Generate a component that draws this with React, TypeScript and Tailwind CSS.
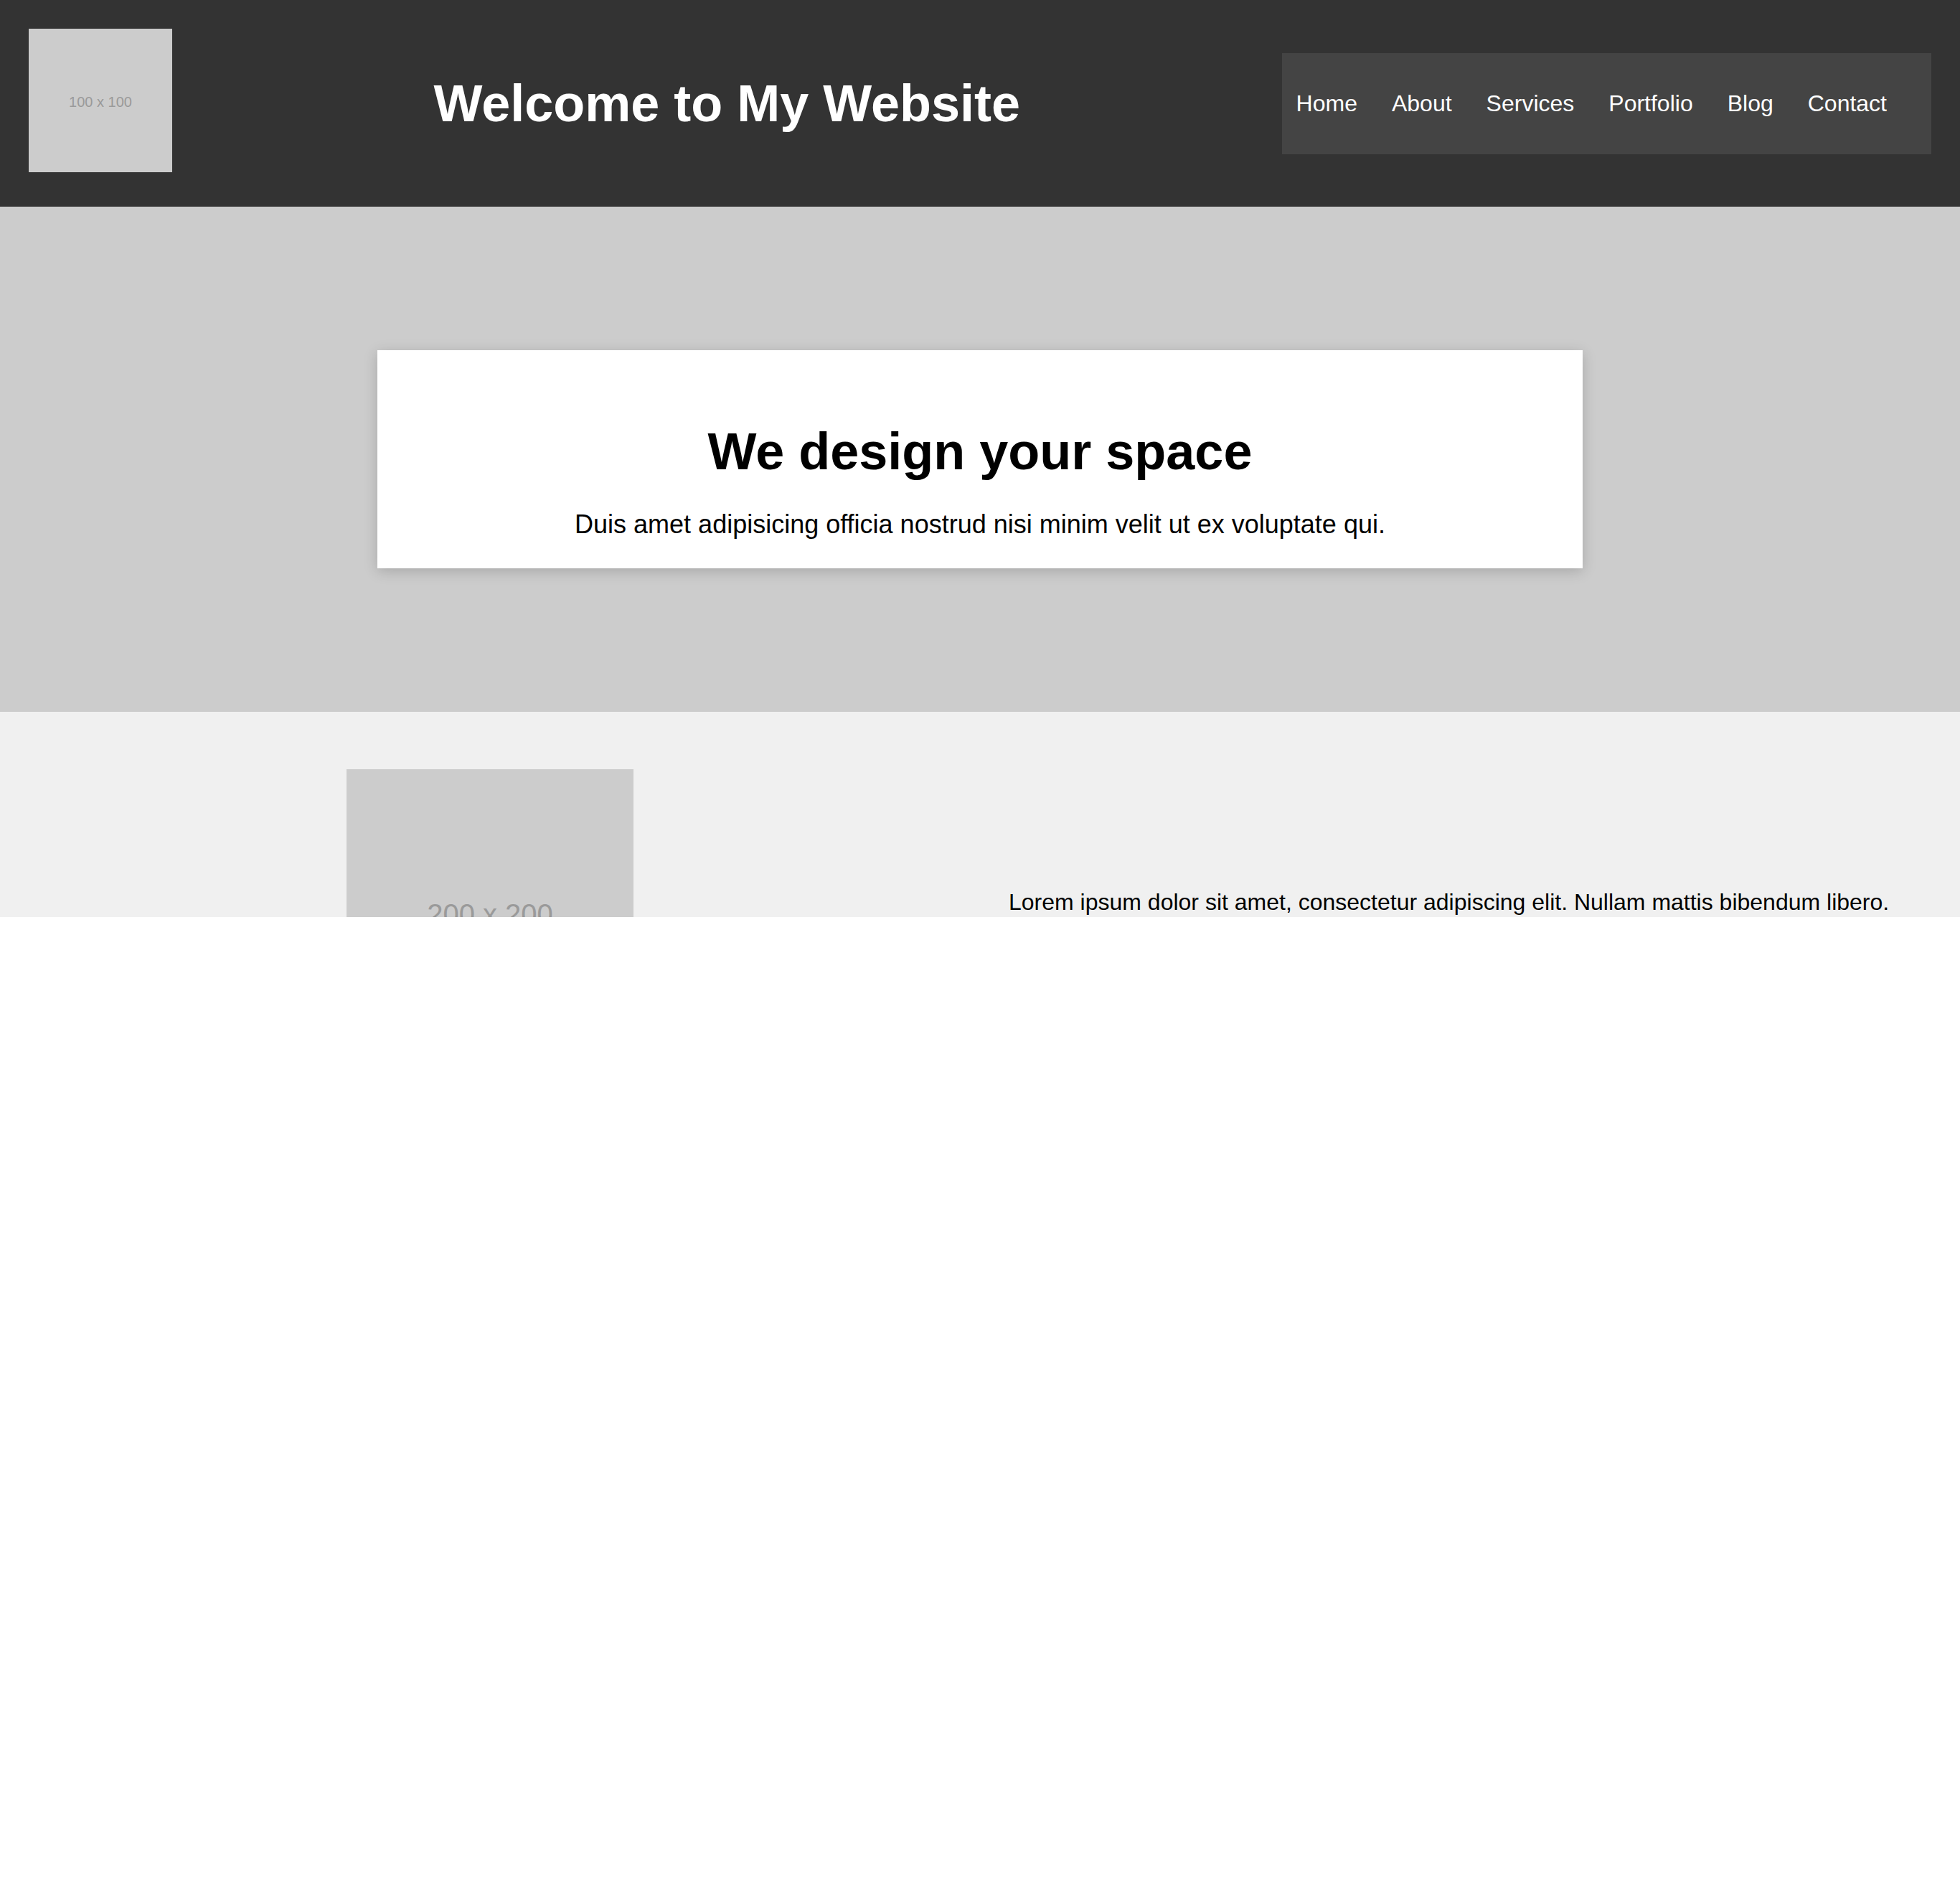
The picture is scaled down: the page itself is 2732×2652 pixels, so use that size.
import React from 'react';

const navLinks = ['Home', 'About', 'Services', 'Portfolio', 'Blog', 'Contact'];

function Placeholder({ label, className, textClass }: { label: string; className: string; textClass: string }) {
  return (
    <div className={`bg-[#cccccc] flex items-center justify-center shrink-0 ${className}`}>
      <span className={`text-[#9a9a9a] ${textClass}`}>{label}</span>
    </div>
  );
}

export default function App() {
  return (
    <div className="h-[1278px] overflow-hidden font-['Liberation_Sans',Arial,sans-serif]">
      {/* header */}
      <header className="h-[288px] bg-[#333333] px-10 flex items-center justify-between">
        <Placeholder label="100 x 100" className="w-[200px] h-[200px] mb-2" textClass="text-[20px] mt-1" />
        <h1 className="text-[72px] leading-[83px] font-bold text-white">Welcome to My Website</h1>
        <nav className="h-[141px] bg-[#444444] flex items-center pl-5 pr-[62px]">
          <ul className="flex items-center gap-12">
            {navLinks.map((link) => (
              <li key={link}>
                <a href="#" className="text-[32px] leading-[37px] text-white">
                  {link}
                </a>
              </li>
            ))}
          </ul>
        </nav>
      </header>

      {/* hero */}
      <section className="bg-[#cccccc] py-[200px] flex justify-center">
        <div className="w-[1680px] h-[304px] bg-white shadow-[0_4px_18px_rgba(0,0,0,0.18)] px-10 pt-[100px] text-center text-black">
          <h2 className="text-[72px] leading-[83px] font-bold mb-[39px]">We design your space</h2>
          <p className="text-[36px] leading-[41px]">
            Duis amet adipisicing officia nostrud nisi minim velit ut ex voluptate qui.
          </p>
        </div>
      </section>

      {/* about */}
      <section className="bg-[#f0f0f0] pt-20 pb-20 grid grid-cols-2 items-center">
        <div className="flex justify-center">
          <Placeholder label="200 x 200" className="w-[400px] h-[400px] mb-2" textClass="text-[40px] mt-1" />
        </div>
        <div className="px-10">
          <p className="text-[32px] leading-[37px] text-black">
            Lorem ipsum dolor sit amet, consectetur adipiscing elit. Nullam mattis bibendum libero.
            Vestibulum ante ipsum primis in faucibus orci luctus.
          </p>
        </div>
      </section>
    </div>
  );
}
